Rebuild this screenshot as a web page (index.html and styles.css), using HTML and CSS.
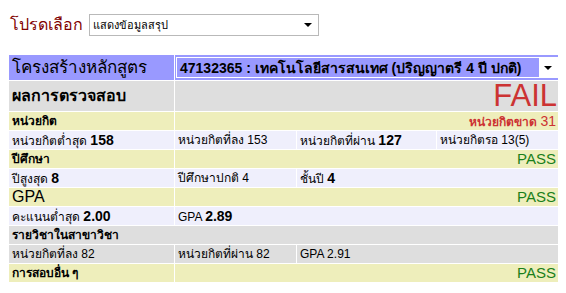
FILE: index.html
```html
<!DOCTYPE html>
<html lang="th">
<head>
    <meta charset="UTF-8">
    <title>ผลการตรวจสอบ</title>
    <link rel="stylesheet" href="styles.css">
</head>
<body>
    <div class="choose">
        <span class="choose-label">โปรดเลือก</span>
        <div class="picker">
            <span class="picker-text">แสดงข้อมูลสรุป</span>
            <span class="picker-arrow"></span>
        </div>
    </div>

    <table class="result">
        <colgroup>
            <col class="c1"><col class="c2"><col class="c3"><col class="c4">
        </colgroup>
        <tr class="row-blue">
            <td class="big">โครงสร้างหลักสูตร</td>
            <td colspan="3" class="plan-cell">
                <div class="plan">
                    <span class="plan-text">47132365 : เทคโนโลยีสารสนเทศ (ปริญญาตรี 4 ปี ปกติ)</span>
                    <span class="plan-btn"><span class="picker-arrow"></span></span>
                </div>
            </td>
        </tr>
        <tr class="row-gray tall">
            <td class="mid bold">ผลการตรวจสอบ</td>
            <td colspan="3" class="right fail">FAIL</td>
        </tr>

        <tr class="row-yellow">
            <td class="bold">หน่วยกิต</td>
            <td colspan="3" class="right short">หน่วยกิตขาด <span class="num-plain">31</span></td>
        </tr>
        <tr class="row-lav">
            <td>หน่วยกิตต่ำสุด <b class="num">158</b></td>
            <td>หน่วยกิตที่ลง 153</td>
            <td>หน่วยกิตที่ผ่าน <b class="num">127</b></td>
            <td>หน่วยกิตรอ 13(5)</td>
        </tr>

        <tr class="row-yellow">
            <td class="bold">ปีศึกษา</td>
            <td colspan="3" class="right pass">PASS</td>
        </tr>
        <tr class="row-lav">
            <td>ปีสูงสุด <b class="num">8</b></td>
            <td>ปีศึกษาปกติ 4</td>
            <td colspan="2">ชั้นปี <b class="num">4</b></td>
        </tr>

        <tr class="row-yellow">
            <td class="latin">GPA</td>
            <td colspan="3" class="right pass">PASS</td>
        </tr>
        <tr class="row-lav">
            <td>คะแนนต่ำสุด <b class="num">2.00</b></td>
            <td colspan="3">GPA <b class="num">2.89</b></td>
        </tr>

        <tr class="row-gray">
            <td colspan="4" class="bold">รายวิชาในสาขาวิชา</td>
        </tr>
        <tr class="row-gray">
            <td>หน่วยกิตที่ลง 82</td>
            <td>หน่วยกิตที่ผ่าน 82</td>
            <td colspan="2">GPA 2.91</td>
        </tr>

        <tr class="row-yellow">
            <td class="bold">การสอบอื่น ๆ</td>
            <td colspan="3" class="right pass">PASS</td>
        </tr>
    </table>
</body>
</html>
```

FILE: styles.css
```css
body {
    margin: 8px;
    font-family: Tahoma, "Liberation Sans", sans-serif;
    font-size: 12px;
    color: #000000;
    background-color: #ffffff;
}

.choose {
    display: flex;
    align-items: center;
    height: 28px;
    margin-top: 3px;
}

.choose-label {
    flex-shrink: 0;
    white-space: nowrap;
    color: #800000;
    font-size: 16px;
    line-height: 22px;
    margin-left: 2px;
    margin-right: 6px;
}

.picker {
    position: relative;
    flex-shrink: 0;
    width: 228px;
    height: 20px;
    border: 1px solid #b9b9b9;
    background-color: #ffffff;
    display: flex;
    align-items: center;
    font-size: 11px;
    line-height: 14px;
}

.picker-text {
    padding-left: 3px;
}

.picker-arrow {
    position: absolute;
    right: 6px;
    top: 8px;
    width: 0;
    height: 0;
    border-left: 4px solid transparent;
    border-right: 4px solid transparent;
    border-top: 4px solid #000000;
}

.result {
    border-collapse: separate;
    border-spacing: 1px;
    width: 551px;
    margin-top: 15px;
    table-layout: fixed;
}

.c1 { width: 165px; }
.c2 { width: 121px; }
.c3 { width: 139px; }
.c4 { width: 122px; }

.result td {
    height: 18px;
    padding: 0 3px;
    line-height: 16px;
    white-space: nowrap;
    overflow: hidden;
}

.row-blue td {
    background-color: #9999ff;
    height: 25px;
}

.row-gray td {
    background-color: #dedede;
}

.row-yellow td {
    background-color: #eeeebb;
}

.row-lav td {
    background-color: #efeffc;
}

.tall td {
    height: 30px;
}

.result .big {
    font-size: 17px;
    line-height: 22px;
}

.result .mid {
    font-size: 16px;
    line-height: 22px;
}

.bold {
    font-weight: bold;
}

.latin {
    font-family: "Liberation Sans", Arial, sans-serif;
    font-size: 16px;
}

.num {
    font-family: "Liberation Sans", Arial, sans-serif;
    font-size: 14px;
}

.num-plain {
    font-family: "Liberation Sans", Arial, sans-serif;
    font-weight: normal;
    font-size: 14px;
}

.right {
    text-align: right;
}

.result .fail {
    font-family: "Liberation Sans", Arial, sans-serif;
    font-size: 31px;
    line-height: 30px;
    overflow: visible;
    color: #cc3333;
    padding-right: 2px;
}

.pass {
    font-family: "Liberation Sans", Arial, sans-serif;
    font-size: 15px;
    color: #1a801a;
}

.short {
    color: #cc3333;
    font-weight: bold;
}

.result .plan-cell {
    padding: 0 1px;
}

.plan {
    position: relative;
    display: flex;
    align-items: center;
    height: 19px;
    border: 1px solid #ffffff;
    background-color: #9999ff;
    font-weight: bold;
    font-size: 14px;
}

.plan-text {
    padding-left: 3px;
}

.plan-btn {
    position: absolute;
    right: 0;
    top: 0;
    width: 18px;
    height: 19px;
    background-color: #ffffff;
}

.plan-btn .picker-arrow {
    right: 5px;
}
```
